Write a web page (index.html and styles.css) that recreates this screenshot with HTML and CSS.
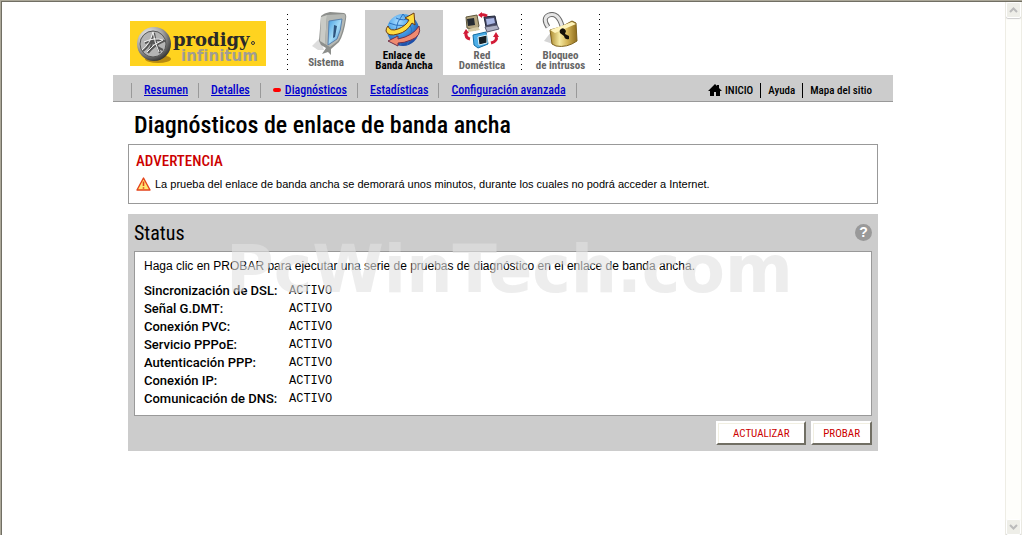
FILE: index.html
```html
<!DOCTYPE html>
<html lang="es">
<head>
    <meta charset="UTF-8">
    <meta name="viewport" content="width=device-width, initial-scale=1.0">
    <title>Diagnósticos de enlace de banda ancha</title>
    <link rel="stylesheet" href="styles.css">
</head>
<body>
    <div class="window">
        <div class="page">
            <div class="wrapper">
                <header class="header">
                    <a class="logo" href="#" aria-label="prodigy infinitum">
                        <svg width="136" height="45" viewBox="0 0 136 45">
                            <defs>
                                <radialGradient id="coin" cx="35%" cy="30%" r="75%">
                                    <stop offset="0" stop-color="#fff"/>
                                    <stop offset=".55" stop-color="#a5a5a5"/>
                                    <stop offset="1" stop-color="#303030"/>
                                </radialGradient>
                            </defs>
                            <rect width="136" height="45" fill="#ffd31f"/>
                            <ellipse cx="28" cy="38" rx="13" ry="4" fill="#b88a10"/>
                            <circle cx="24" cy="23" r="17" fill="url(#coin)"/>
                            <circle cx="23" cy="23" r="13" fill="#b4b4b4" stroke="#555"/>
                            <path d="M13 30Q21 24 24 12Q26 24 30 32M15 22Q26 17 34 20Q24 24 18 32Q24 22 21 17Q25 26 33 29" fill="none" stroke="#555" stroke-width="2"/>
                            <path d="M12 29Q20 23 23 11Q25 23 29 31M14 21Q25 16 33 19Q23 23 17 31" fill="none" stroke="#f2f2f2"/>
                            <text class="logo-prodigy" x="43" y="25">prodigy</text>
                            <circle cx="123" cy="22" r="1.5" fill="none" stroke="#333"/>
                            <text class="logo-infinitum" x="51" y="40">infinitum</text>
                        </svg>
                    </a>
                    <nav class="tabs">
                        <a class="tab tab-dotted" href="#">
                            <svg class="tab-icon" width="44" height="44" viewBox="0 0 44 44">
                                <defs>
                                    <linearGradient id="screen" x1="0" y1="0" x2="1" y2="1">
                                        <stop offset="0" stop-color="#3f9be0"/>
                                        <stop offset=".5" stop-color="#a5dcf8"/>
                                        <stop offset="1" stop-color="#3b86cc"/>
                                    </linearGradient>
                                </defs>
                                <path d="M8 34L16 26L20 38L14 38Z" fill="#ddd"/>
                                <path d="M17 4Q20 1 26 0L40 1Q43 2 42 7Q40 22 35 30L27 37L27 43L24 40L18 42L22 36L17 33L15 29Z" fill="#8d8f8c"/>
                                <path d="M17 5L23 3L21 32L16 29Z" fill="#c9cbc6"/>
                                <path d="M23 3L40 2Q42 3 41 7Q38 23 34 29L26 35L21 32Z" fill="#b5b8b4"/>
                                <path d="M25 9L38 7Q37 19 33 27L24 33Z" fill="url(#screen)" stroke="#5b82ad"/>
                                <path d="M30 13L33 14L31 25L29 26Z" fill="#2e557f"/>
                            </svg>
                            <span class="tab-label">Sistema</span>
                        </a>
                        <a class="tab tab-active" href="#">
                            <svg class="tab-icon" width="44" height="37" viewBox="0 0 44 37">
                                <defs>
                                    <radialGradient id="globe" cx="35%" cy="25%" r="75%">
                                        <stop offset="0" stop-color="#a9dcff"/>
                                        <stop offset=".5" stop-color="#459fe8"/>
                                        <stop offset="1" stop-color="#1c4ea8"/>
                                    </radialGradient>
                                </defs>
                                <circle cx="21" cy="18" r="16" fill="url(#globe)"/>
                                <path d="M21 2Q8 18 19 33M21 2Q36 17 25 33M7 11Q21 17 34 9M14 6Q21 10 30 5" fill="none" stroke="#2c71bf"/>
                                <path d="M6 14Q8 20 16 17Q24 14 27 8L23 6L32 1L33 13L30 11Q25 20 16 22Q6 25 4 19Q4 16 6 14Z" fill="#ffdc3f" stroke="#6e3c12"/>
                                <path d="M37 14Q40 24 29 28Q22 31 16 31L16 34L6 29L16 24L16 27Q31 24 37 14Z" fill="#ef8a70" stroke="#703048"/>
                            </svg>
                            <span class="tab-label">Enlace de<br>Banda Ancha</span>
                        </a>
                        <a class="tab" href="#">
                            <svg class="tab-icon" width="44" height="37" viewBox="0 0 44 37">
                                <path d="M6 5L17 3L19 14L16 18L7 16Z" fill="#b5a780" stroke="#5f573c"/>
                                <path d="M7 7L14 6L15 13L8 14Z" fill="#252b31"/>
                                <path d="M8 17L18 15L20 18L8 20Z" fill="#d7cca5"/>
                                <path d="M24 5L35 4L37 13L26 15Z" fill="#454866" stroke="#202638"/>
                                <path d="M26 7L34 6L35 11L27 13Z" fill="#a9b7e4"/>
                                <path d="M25 15L37 13L39 17L27 20Z" fill="#aeb1c4" stroke="#55576c"/>
                                <path d="M13 23L26 20L28 32L18 36L14 33Z" fill="#4caee8" stroke="#126da2"/>
                                <path d="M18 25L27 23L27 31L19 33Z" fill="#172025" stroke="#ddf6ff"/>
                                <path d="M6 20Q5 26 10 27M27 4Q24 2 21 3M36 24Q38 29 31 31" fill="none" stroke="#d21b37" stroke-width="3"/>
                                <path d="M3 22L6 17L9 21ZM18 3L22 0L22 6ZM33 25L36 20L39 25Z" fill="#d21b37"/>
                            </svg>
                            <span class="tab-label">Red<br>Doméstica</span>
                        </a>
                        <a class="tab tab-dotted tab-last" href="#">
                            <svg class="tab-icon" width="44" height="37" viewBox="0 0 44 37">
                                <defs>
                                    <linearGradient id="brass">
                                        <stop offset="0" stop-color="#ac8a2d"/>
                                        <stop offset=".35" stop-color="#f5e9a1"/>
                                        <stop offset=".65" stop-color="#d4b456"/>
                                        <stop offset="1" stop-color="#8e6c1c"/>
                                    </linearGradient>
                                </defs>
                                <path d="M5 29L12 20L20 34Z" fill="#d5d5d5"/>
                                <path d="M9 15Q3 6 10 3Q19 0 23 14" fill="none" stroke="#696969" stroke-width="5"/>
                                <path d="M9 15Q3 6 10 3Q19 0 23 14" fill="none" stroke="#e5e5e5" stroke-width="3"/>
                                <path d="M11 18Q23 16 33 9L37 11L38 29Q28 36 17 34L13 32Z" fill="url(#brass)" stroke="#80641f"/>
                                <path d="M11 18L33 10L37 12L16 21Z" fill="#fff4bb"/>
                                <path d="M22 17Q25 15 27 19L26 22L30 24L30 27Q26 28 25 24L21 21Q20 18 22 17Z" fill="#141008"/>
                            </svg>
                            <span class="tab-label">Bloqueo<br>de intrusos</span>
                        </a>
                    </nav>
                </header>

                <div class="menu">
                    <nav class="menu-left">
                        <a href="#">Resumen</a>
                        <a href="#">Detalles</a>
                        <a class="current" href="#">Diagnósticos</a>
                        <a href="#">Estadísticas</a>
                        <a href="#">Configuración avanzada</a>
                    </nav>
                    <nav class="menu-right">
                        <a href="#">
                            <svg width="14" height="12" viewBox="0 0 14 12">
                                <path d="M7 0L9 2V1H11V4L14 7H12V12H8V8H6V12H2V7H0Z"/>
                            </svg>
                            INICIO
                        </a>
                        <a href="#">Ayuda</a>
                        <a href="#">Mapa del sitio</a>
                    </nav>
                </div>

                <main class="content">
                    <h1>Diagnósticos de enlace de banda ancha</h1>

                    <section class="warning">
                        <h2>ADVERTENCIA</h2>
                        <p>
                            <svg width="15" height="14" viewBox="0 0 15 14">
                                <path d="M7.5 1L14 13H1Z" fill="#ffe873" stroke="#e4431b" stroke-width="1.4" stroke-linejoin="round"/>
                                <path d="M7.5 4.5V9M7.5 10.2V11.8" stroke="#e4431b" stroke-width="1.6"/>
                            </svg>
                            La prueba del enlace de banda ancha se demorará unos minutos, durante los cuales no podrá acceder a Internet.
                        </p>
                    </section>

                    <section class="status">
                        <div class="status-head">
                            <h2>Status</h2>
                            <button class="help" type="button" aria-label="Ayuda">?</button>
                        </div>
                        <div class="status-body">
                            <p>Haga clic en PROBAR para ejecutar una serie de pruebas de diagnóstico en el enlace de banda ancha.</p>
                            <table class="results">
                                <tr><th scope="row">Sincronización de DSL:</th><td>ACTIVO</td></tr>
                                <tr><th scope="row">Señal G.DMT:</th><td>ACTIVO</td></tr>
                                <tr><th scope="row">Conexión PVC:</th><td>ACTIVO</td></tr>
                                <tr><th scope="row">Servicio PPPoE:</th><td>ACTIVO</td></tr>
                                <tr><th scope="row">Autenticación PPP:</th><td>ACTIVO</td></tr>
                                <tr><th scope="row">Conexión IP:</th><td>ACTIVO</td></tr>
                                <tr><th scope="row">Comunicación de DNS:</th><td>ACTIVO</td></tr>
                            </table>
                        </div>
                        <div class="actions">
                            <button class="btn btn-wide" type="button">ACTUALIZAR</button>
                            <button class="btn" type="button">PROBAR</button>
                        </div>
                        <div class="watermark">PcWinTech.com</div>
                    </section>
                </main>
            </div>
        </div>

        <div class="scrollbar">
            <button class="scroll-btn" type="button" aria-label="Subir">
                <svg width="9" height="6" viewBox="0 0 9 6"><path d="M1 5L4.5 1.5L8 5"/></svg>
            </button>
            <button class="scroll-btn" type="button" aria-label="Bajar">
                <svg width="9" height="6" viewBox="0 0 9 6"><path d="M1 1L4.5 4.5L8 1"/></svg>
            </button>
        </div>
    </div>
</body>
</html>
```

FILE: styles.css
```css
* {
    box-sizing: border-box;
}

body {
    margin: 0;
    background: #fff;
    color: #000;
    font-family: "Liberation Sans", Arial, sans-serif;
    font-size: 11px;
}

h1, h2, p {
    margin: 0;
}

.window {
    display: flex;
    min-height: 100vh;
    padding-top: 1px;
    border-top: 1px solid #aca899;
    border-left: 1px solid #aca899;
    box-shadow: inset 1px 1px #716f64;
}

.page {
    flex: 1;
}

.wrapper {
    max-width: 780px;
    margin: 0 auto;
}

/* Cabecera */
.header {
    display: flex;
    align-items: flex-start;
    padding-top: 8px;
}

.logo {
    margin: 11px 21px 0 17px;
}

.logo svg {
    display: block;
}

.logo-prodigy {
    font-family: "DejaVu Serif", serif;
    font-size: 18px;
    font-weight: bold;
    fill: #2a2a2a;
}

.logo-infinitum {
    font-family: "DejaVu Sans", sans-serif;
    font-size: 15px;
    font-weight: bold;
    fill: #a09d93;
}

.tabs {
    display: flex;
}

.tab {
    display: flex;
    flex-direction: column;
    align-items: center;
    width: 78px;
    height: 65px;
    padding-top: 2px;
    color: #666;
    font-family: "Roboto Condensed", Roboto, sans-serif;
    font-size: 11px;
    font-weight: bold;
    line-height: 10px;
    text-align: center;
    text-decoration: none;
}

.tab-dotted {
    background: repeating-linear-gradient(#000 0 1px, transparent 1px 5px) 0 4px / 1px 57px no-repeat;
}

.tab-last {
    width: 79px;
    background:
        repeating-linear-gradient(#000 0 1px, transparent 1px 5px) 0 4px / 1px 57px no-repeat,
        repeating-linear-gradient(#000 0 1px, transparent 1px 5px) 100% 4px / 1px 57px no-repeat;
}

.tab-active {
    background: #ccc;
    color: #000;
}

.tab-label {
    margin-top: 2px;
}

/* Menú */
.menu {
    display: flex;
    justify-content: space-between;
    align-items: center;
    height: 27px;
    padding: 4px 21px 0 18px;
    background: #ccc;
    border-bottom: 1px solid #999;
    font-family: "Roboto Condensed", Roboto, sans-serif;
    font-size: 12px;
    font-weight: 500;
}

.menu-left,
.menu-right {
    display: flex;
    align-items: center;
}

.menu-left a {
    padding: 0 10px 0 12px;
    border-left: 1px solid #999;
    color: #00c;
    line-height: 15px;
}

.menu-left a:last-child {
    border-right: 1px solid #999;
}

.menu-left .current::before {
    content: "";
    display: inline-block;
    width: 8px;
    height: 4px;
    margin-right: 4px;
    border-radius: 2px;
    background: #f00;
    vertical-align: 2px;
}

.menu-right {
    font-size: 11px;
}

.menu-right a {
    display: flex;
    align-items: center;
    gap: 3px;
    padding: 0 7px;
    color: #000;
    line-height: 15px;
    text-decoration: none;
}

.menu-right a + a {
    border-left: 1px solid #000;
}

.menu-right a:last-child {
    padding-right: 0;
}

/* Contenido */
.content {
    padding: 11px 15px 0;
}

h1 {
    padding-left: 6px;
    font-family: "Roboto Condensed", Roboto, sans-serif;
    font-size: 24px;
    font-weight: 500;
    line-height: 24px;
}

.warning {
    min-height: 60px;
    margin-top: 7px;
    padding: 8px 7px;
    border: 1px solid #999;
}

.warning h2 {
    color: #c00;
    font-family: "Roboto Condensed", Roboto, sans-serif;
    font-size: 15px;
    font-weight: 500;
    line-height: 16px;
}

.warning p {
    display: flex;
    align-items: center;
    gap: 4px;
    margin-top: 7px;
    line-height: 16px;
}

.status {
    position: relative;
    margin-top: 10px;
    padding: 0 6px 6px;
    background: #ccc;
}

.status-head {
    display: flex;
    justify-content: space-between;
    align-items: center;
    height: 37px;
}

.status-head h2 {
    font-family: "Roboto Condensed", Roboto, sans-serif;
    font-size: 20px;
    font-weight: normal;
}

.help {
    width: 17px;
    height: 17px;
    padding: 0;
    border: 0;
    border-radius: 50%;
    background: #999;
    color: #fff;
    font-family: "Liberation Sans", Arial, sans-serif;
    font-size: 14px;
    font-weight: bold;
    line-height: 17px;
}

.status-body {
    padding: 6px 9px 7px;
    border: 1px solid #999;
    background: #fff;
    font-size: 12px;
}

.status-body p {
    line-height: 16px;
}

.results {
    margin-top: 8px;
    border-collapse: collapse;
}

.results th,
.results td {
    height: 18px;
    padding: 0;
    line-height: 18px;
    text-align: left;
}

.results th {
    width: 145px;
    font-family: Roboto, sans-serif;
    font-size: 13px;
    font-weight: 500;
}

.results td {
    font-family: "Liberation Mono", monospace;
}

.actions {
    display: flex;
    justify-content: flex-end;
    gap: 5px;
    margin-top: 5px;
}

.btn {
    height: 24px;
    padding: 0 10px;
    border: 2px solid;
    border-color: #fff #716f64 #716f64 #fff;
    background: #fff;
    box-shadow: inset 1px 1px #f1efe2;
    color: #c00;
    font-family: "Roboto Condensed", Roboto, sans-serif;
    font-size: 11px;
}

.btn-wide {
    min-width: 90px;
}

.watermark {
    position: absolute;
    top: 18px;
    left: 98px;
    color: rgba(225, 225, 225, 0.6);
    font-family: "DejaVu Sans", Verdana, sans-serif;
    font-size: 65px;
    font-weight: bold;
    line-height: 75px;
    pointer-events: none;
}

/* Barra de desplazamiento */
.scrollbar {
    display: flex;
    flex-direction: column;
    justify-content: space-between;
    width: 17px;
    border-left: 1px solid #eeede5;
    border-right: 1px solid #eeede5;
    background: #fefefb;
}

.scroll-btn {
    display: flex;
    align-items: center;
    justify-content: center;
    height: 16px;
    padding: 0;
    border: 1px solid #fff;
    border-radius: 2px;
    background: #eeeee8;
    box-shadow: 0 1px 1px #ccc;
}

.scroll-btn path {
    fill: none;
    stroke: #bbb;
    stroke-width: 2;
}
```
